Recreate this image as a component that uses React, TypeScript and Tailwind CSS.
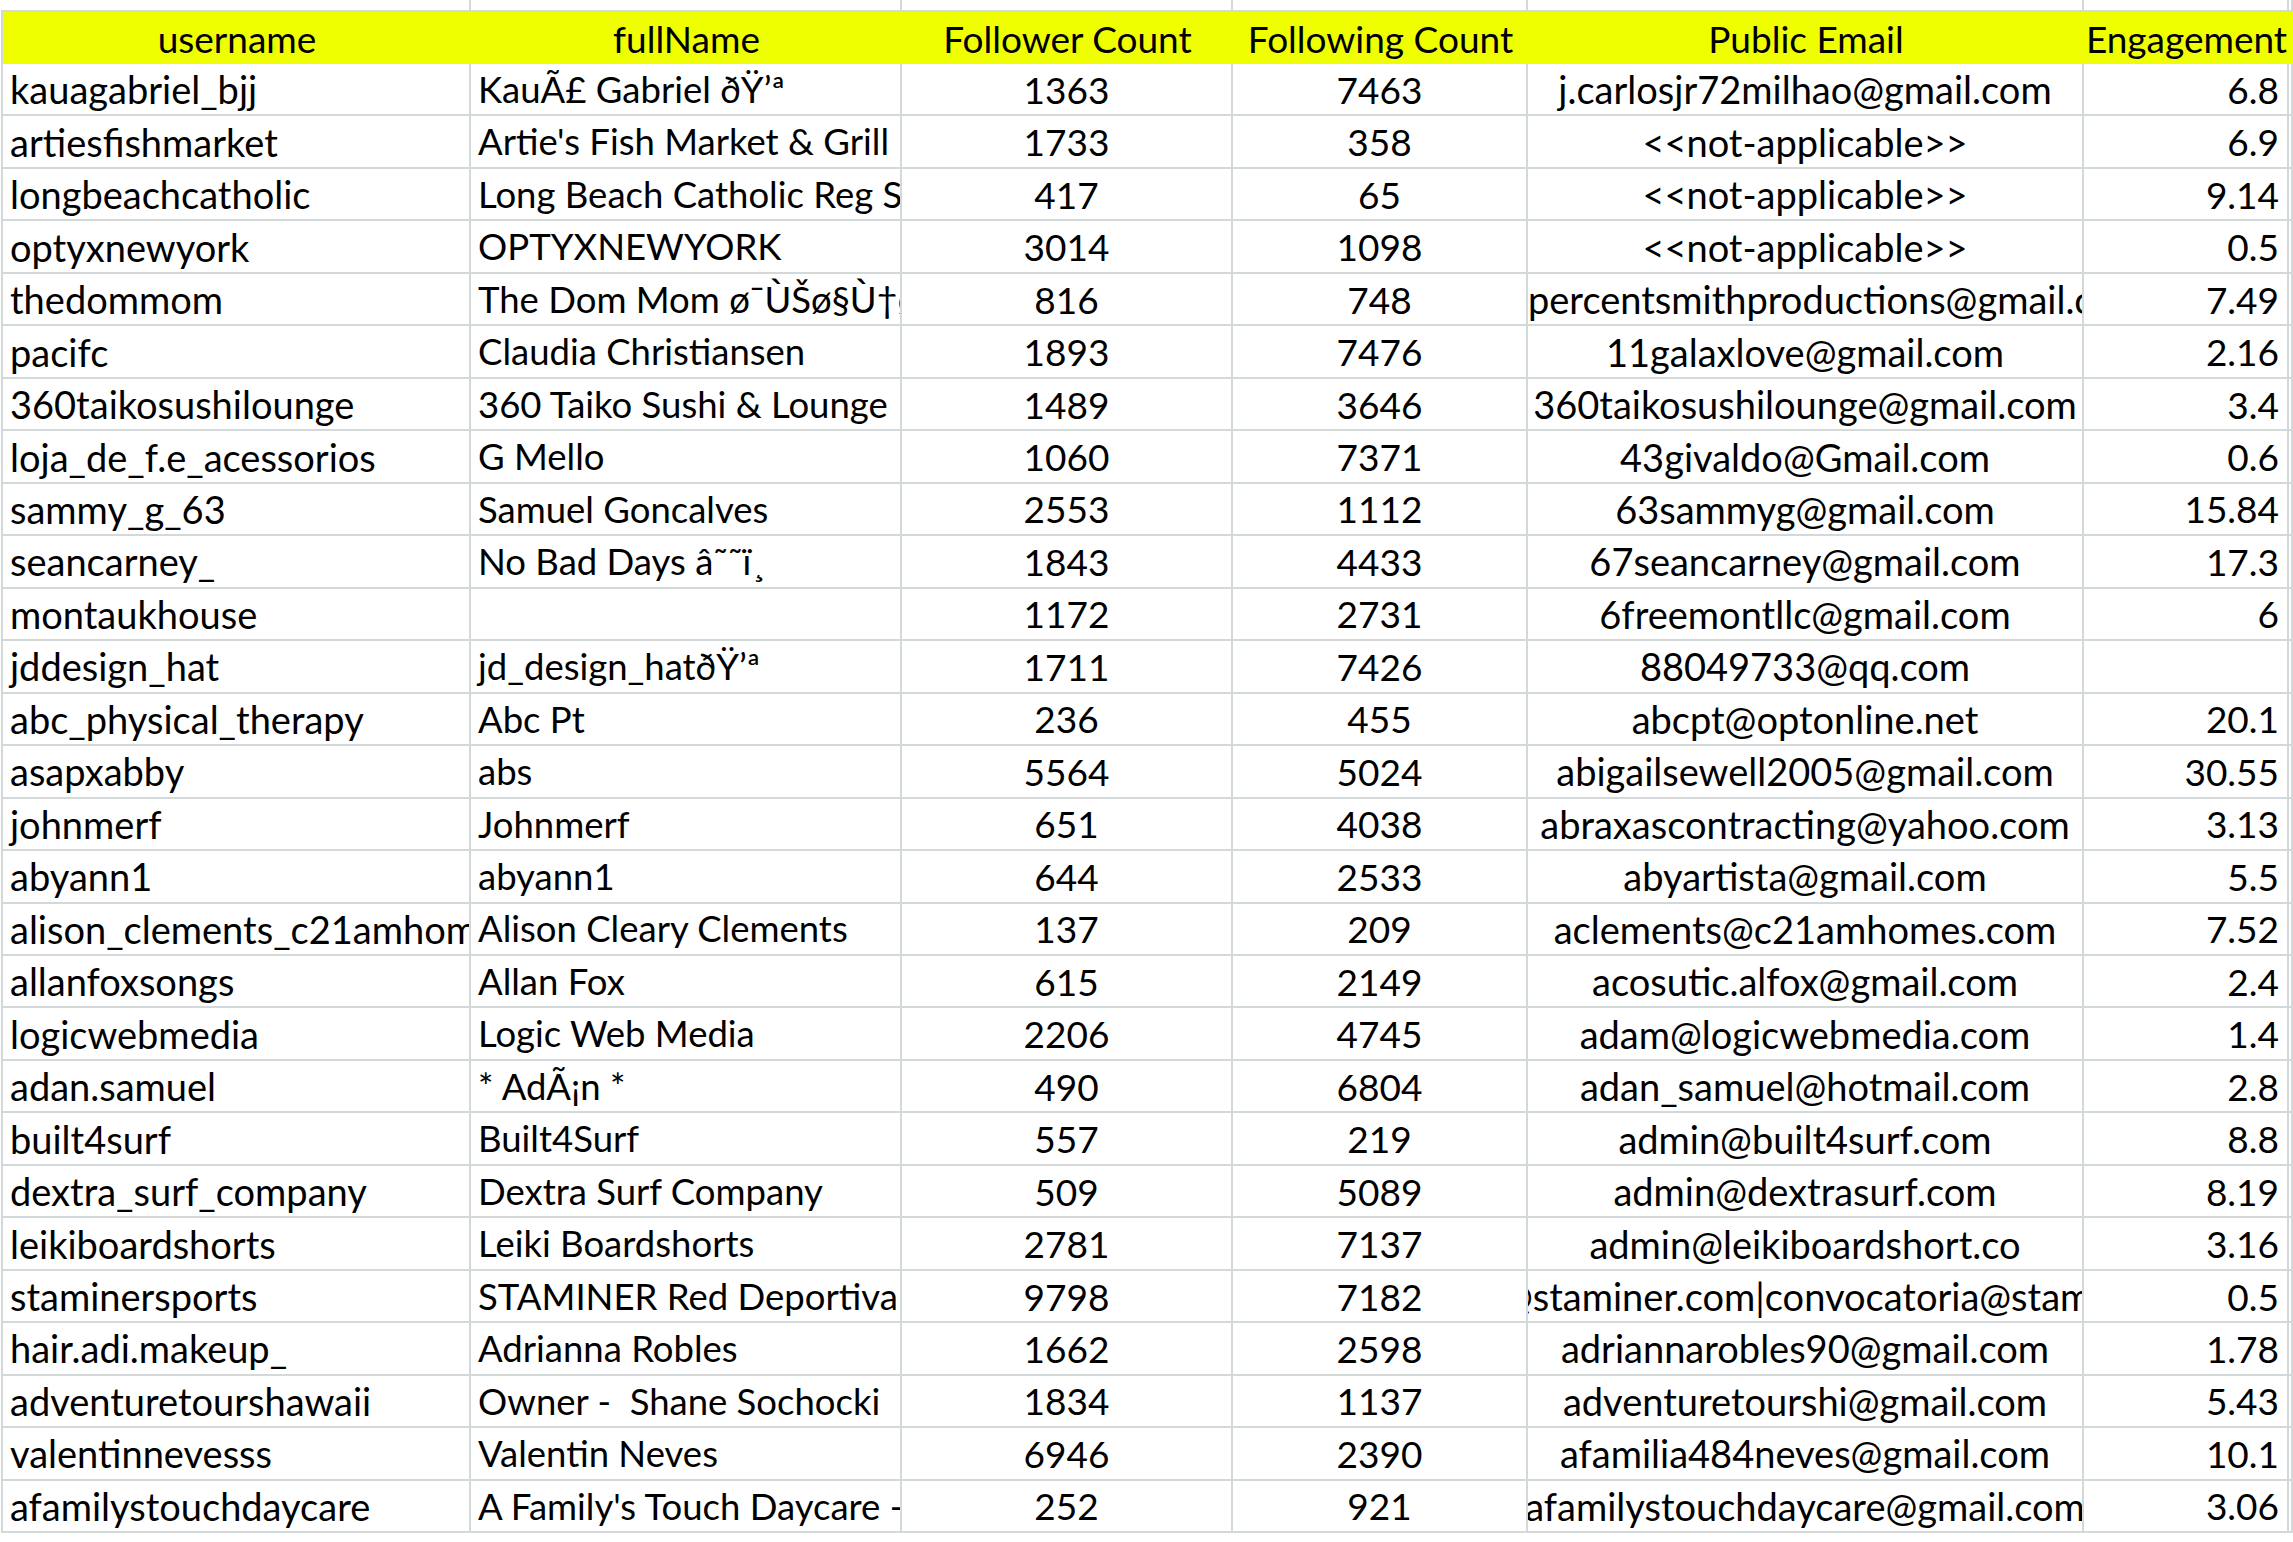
import React from 'react';

type Row = [string, string, string, string, string, string];

const rows: Row[] = [
  ['kauagabriel_bjj', 'KauÃ£ Gabriel ðŸ’ª', '1363', '7463', 'j.carlosjr72milhao@gmail.com', '6.8'],
  ['artiesfishmarket', "Artie's Fish Market & Grill", '1733', '358', '<<not-applicable>>', '6.9'],
  ['longbeachcatholic', 'Long Beach Catholic Reg School', '417', '65', '<<not-applicable>>', '9.14'],
  ['optyxnewyork', 'OPTYXNEWYORK', '3014', '1098', '<<not-applicable>>', '0.5'],
  ['thedommom', 'The Dom Mom ø¯ÙŠø§Ù†ø§', '816', '748', 'percentsmithproductions@gmail.com', '7.49'],
  ['pacifc', 'Claudia Christiansen', '1893', '7476', '11galaxlove@gmail.com', '2.16'],
  ['360taikosushilounge', '360 Taiko Sushi & Lounge', '1489', '3646', '360taikosushilounge@gmail.com', '3.4'],
  ['loja_de_f.e_acessorios', 'G Mello', '1060', '7371', '43givaldo@Gmail.com', '0.6'],
  ['sammy_g_63', 'Samuel Goncalves', '2553', '1112', '63sammyg@gmail.com', '15.84'],
  ['seancarney_', 'No Bad Days â˜˜ï¸', '1843', '4433', '67seancarney@gmail.com', '17.3'],
  ['montaukhouse', '', '1172', '2731', '6freemontllc@gmail.com', '6'],
  ['jddesign_hat', 'jd_design_hatðŸ’ª', '1711', '7426', '88049733@qq.com', ''],
  ['abc_physical_therapy', 'Abc Pt', '236', '455', 'abcpt@optonline.net', '20.1'],
  ['asapxabby', 'abs', '5564', '5024', 'abigailsewell2005@gmail.com', '30.55'],
  ['johnmerf', 'Johnmerf', '651', '4038', 'abraxascontracting@yahoo.com', '3.13'],
  ['abyann1', 'abyann1', '644', '2533', 'abyartista@gmail.com', '5.5'],
  ['alison_clements_c21amhomes', 'Alison Cleary Clements', '137', '209', 'aclements@c21amhomes.com', '7.52'],
  ['allanfoxsongs', 'Allan Fox', '615', '2149', 'acosutic.alfox@gmail.com', '2.4'],
  ['logicwebmedia', 'Logic Web Media', '2206', '4745', 'adam@logicwebmedia.com', '1.4'],
  ['adan.samuel', '* AdÃ¡n *', '490', '6804', 'adan_samuel@hotmail.com', '2.8'],
  ['built4surf', 'Built4Surf', '557', '219', 'admin@built4surf.com', '8.8'],
  ['dextra_surf_company', 'Dextra Surf Company', '509', '5089', 'admin@dextrasurf.com', '8.19'],
  ['leikiboardshorts', 'Leiki Boardshorts', '2781', '7137', 'admin@leikiboardshort.co', '3.16'],
  ['staminersports', 'STAMINER Red Deportiva', '9798', '7182', 'contact@staminer.com|convocatoria@staminer.com', '0.5'],
  ['hair.adi.makeup_', 'Adrianna Robles', '1662', '2598', 'adriannarobles90@gmail.com', '1.78'],
  ['adventuretourshawaii', 'Owner -  Shane Sochocki', '1834', '1137', 'adventuretourshi@gmail.com', '5.43'],
  ['valentinnevesss', 'Valentin Neves', '6946', '2390', 'afamilia484neves@gmail.com', '10.1'],
  ['afamilystouchdaycare', "A Family's Touch Daycare - Kids", '252', '921', 'afamilystouchdaycare@gmail.com', '3.06'],
];

const headers = ['username', 'fullName', 'Follower Count', 'Following Count', 'Public Email', 'Engagement'];

const cols = 'grid grid-cols-[468px_431px_331px_295px_556px_205px_1fr]';
const line = 'border-[#d3d9d8]';
const align = [
  'justify-start pl-[7px] text-[38px]',
  'justify-start pl-[7px] text-[36.5px]',
  'justify-center text-[37px]',
  'justify-center text-[37px]',
  'justify-center text-[38px]',
  'justify-end pr-[8px] text-[37px]',
  'justify-center',
];

export default function App() {
  return (
    <div
      className="w-[2293px] h-[1542px] overflow-hidden bg-white text-black text-[37px] leading-none"
      style={{ fontFamily: 'Lato, "Open Sans", sans-serif' }}
    >
      <div className={`${cols} h-[10px] ml-[1px] border-l-2 border-white`}>
        {align.map((_, i) => (
          <div key={i} className={`border-r-2 ${line}`} />
        ))}
      </div>
      <div className={`${cols} h-[54px] ml-[1px] border-t-2 border-l-2 ${line} bg-[#f0ff00]`}>
        {[...headers, ''].map((h, i) => (
          <div key={i} className="flex items-center justify-center overflow-hidden whitespace-nowrap">
            <span>{h}</span>
          </div>
        ))}
      </div>
      {rows.map((r, ri) => (
        <div key={ri} className={`${cols} h-[52.48px] ml-[1px] border-l-2 ${line}`}>
          {[...r, ''].map((c, ci) => {
            // a too-long email that Excel shows from its start
            const a = ci === 4 && c.startsWith('percentsmith') ? 'justify-start text-[38px]' : align[ci];
            return (
              <div
                key={ci}
                className={`flex items-center overflow-hidden whitespace-pre border-r-2 border-b-2 ${line} ${a}`}
              >
                <span>{c}</span>
              </div>
            );
          })}
        </div>
      ))}
    </div>
  );
}
